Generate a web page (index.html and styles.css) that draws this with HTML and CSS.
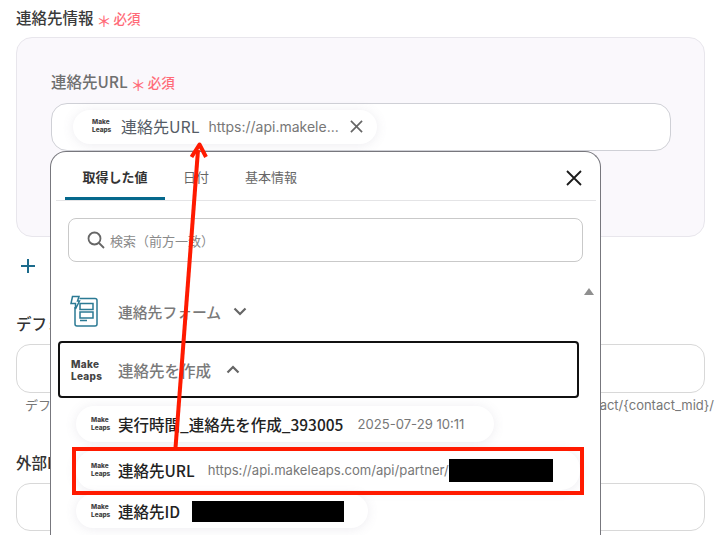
FILE: index.html
```html
<!DOCTYPE html>
<html lang="ja">
<head>
<meta charset="utf-8">
<title>連絡先情報</title>
<link rel="stylesheet" href="styles.css">
</head>
<body>
<main class="page">
  <div class="label section-label">連絡先情報<span class="req"><span class="star">＊</span>必須</span></div>
  <section class="card">
    <div class="label field-label">連絡先URL<span class="req"><span class="star">＊</span>必須</span></div>
    <div class="input">
      <div class="chip chip-main">
        <span class="logo logo-s"><span>Make</span><span>Leaps</span></span>
        <span class="chip-name">連絡先URL</span>
        <span class="chip-value">https://api.makele...</span>
        <svg class="chip-x" viewBox="0 0 14 14"><path d="M1 1 13 13M13 1 1 13"/></svg>
      </div>
    </div>
  </section>
  <svg class="plus" viewBox="0 0 16 16"><path d="M8 1V15M1 8H15"/></svg>
  <div class="label default-label">デフォルト値</div>
  <div class="blank-input"></div>
  <div class="hint"><span>デフォルト値</span><span>act/{contact_mid}/</span></div>
  <div class="label external-label">外部ID</div>
  <div class="blank-input blank-last"></div>
</main>

<div class="popup">
  <div class="tabs">
    <div class="tab tab-active">取得した値</div>
    <div class="tab tab-date">日付</div>
    <div class="tab tab-basic">基本情報</div>
    <svg class="close" viewBox="0 0 16 16"><path d="M1 1 15 15M15 1 1 15"/></svg>
  </div>
  <div class="search">
    <svg class="search-icon" viewBox="0 0 18 18"><circle cx="7.500" cy="7.500" r="6"/><path d="M12 12 17 17"/></svg>
    <span>検索（前方一致）</span>
  </div>
  <div class="scroll-up"></div>
  <div class="group group-form">
    <svg class="form-icon" viewBox="0 0 28 32"><path d="M9.500 3.500H25a2 2 0 0 1 2 2V29a2 2 0 0 1-2 2H7a2 2 0 0 1-2-2V12"/><path d="M2.500 1.500H9L7.500 6H9.500L5.500 14V8.500H1Z"/><path d="M10 8.500H23V14.500H10ZM10 17H23V23H10ZM10 25.500H17"/></svg>
    <span class="group-name">連絡先フォーム</span>
    <svg class="chev" viewBox="0 0 14 9"><path d="M1.500 1.500 7 7 12.500 1.500"/></svg>
  </div>
  <div class="group group-make">
    <span class="logo logo-l"><span>Make</span><span>Leaps</span></span>
    <span class="group-name">連絡先を作成</span>
    <svg class="chev" viewBox="0 0 14 9"><path d="M1.500 7.500 7 2 12.500 7.500"/></svg>
  </div>
  <div class="rows">
    <div class="chip row row-time">
      <span class="logo logo-s"><span>Make</span><span>Leaps</span></span>
      <span class="row-name">実行時間_連絡先を作成_393005</span>
      <span class="row-value">2025-07-29 10:11</span>
    </div>
    <div class="chip row row-url">
      <span class="logo logo-s"><span>Make</span><span>Leaps</span></span>
      <span class="row-name">連絡先URL</span>
      <span class="row-value">https://api.makeleaps.com/api/partner/</span>
      <span class="mask mask-url"></span>
    </div>
    <div class="chip row row-id">
      <span class="logo logo-s"><span>Make</span><span>Leaps</span></span>
      <span class="row-name">連絡先ID</span>
      <span class="mask mask-id"></span>
    </div>
  </div>
</div>

<div class="red-box"></div>
<svg class="arrow" viewBox="0 0 728 535"><path d="M175.500 448 198 150"/><path d="M191.500 157 199.500 144.500 206 157"/></svg>
</body>
</html>
```
FILE: styles.css
```css
* { box-sizing: border-box; }
html, body { margin: 0; height: 535px; overflow: hidden; }
body {
  position: relative;
  width: 728px;
  background: #fff;
  font-family: "Noto Sans CJK JP", "Noto Sans", sans-serif;
  color: #333;
}
.page { padding: 6px 23px 0 16px; height: 535px; overflow: hidden; }
.label { font-size: 15.500px; line-height: 22px; height: 22px; font-weight: 500; white-space: nowrap; }
.section-label { color: #3a3a3a; }
.req { color: #ff6b78; font-size: 13.500px; font-weight: 500; }
.star { font-size: 15px; display: inline-block; line-height: 10px; vertical-align: -3px; margin: 0 2px 0 3px; }
.card {
  margin-top: 9px;
  height: 200px;
  padding: 32px 34px 0;
  background: #faf8fc;
  border: 1px solid #e8e6ec;
  border-radius: 16px;
}
.field-label { color: #6f6f6f; }
.input {
  margin-top: 11px;
  width: 620px;
  height: 48px;
  padding: 6px 0 0 21px;
  background: #fff;
  border: 1px solid #cfd0d6;
  border-radius: 16px;
}
.chip {
  display: flex;
  align-items: center;
  background: #fff;
  border-radius: 19px;
  box-shadow: 0 1px 12px rgba(110, 95, 135, .12);
}
.chip-main { width: 304px; height: 34px; padding: 0 0 2px 19px; }
.logo {
  display: block;
  flex: none;
  font-family: "Inter", "Liberation Sans", sans-serif;
  font-weight: 800;
  color: #444;
}
.logo span { display: block; }
.logo-s { font-size: 6.500px; line-height: 8px; width: 29px; }
.logo-l { font-size: 10px; line-height: 12px; width: 47px; letter-spacing: .3px; }
.chip-name { font-size: 16px; color: #555c66; white-space: nowrap; }
.chip-value { font-size: 14px; color: #777; margin-left: 9px; font-family: "Inter", "Liberation Sans", sans-serif; white-space: nowrap; }
.chip-x { width: 13px; height: 13px; margin-left: 11px; flex: none; }
.chip-x path { stroke: #666; stroke-width: 1.800; fill: none; }
.plus { display: block; width: 16px; height: 16px; margin: 21px 0 0 4px; }
.plus path { stroke: #1c6b8c; stroke-width: 2; fill: none; }
.default-label { margin-top: 38px; }
.external-label { margin-top: 38px; }
.blank-input {
  margin-top: 10px;
  height: 49px;
  border: 1px solid #d8d8d8;
  border-radius: 14px;
  background: #fff;
}
.blank-last { height: 48px; }
.hint {
  display: flex;
  justify-content: space-between;
  margin: 4px -9px 0 9px;
  font-size: 13px;
  line-height: 16px;
  color: #777;
  font-family: "Inter", "Noto Sans CJK JP", sans-serif;
}

.popup {
  position: absolute;
  left: 50px;
  top: 151px;
  width: 551px;
  height: 384px;
  overflow: hidden;
  background: #fff;
  border: 1px solid #77777d;
  border-bottom: 0;
  border-radius: 16px 16px 0 0;
}
.tabs {
  position: relative;
  height: 49px;
  margin: 0 4px 0 5px;
  border-bottom: 1px solid #e4e4e6;
  font-size: 13px;
  line-height: 50px;
  color: #666;
}
.tab { position: absolute; top: 0; height: 48px; }
.tab-active { left: 9px; width: 100px; text-align: center; color: #333; font-weight: 700; border-bottom: 3px solid #05688c; border-radius: 4px 4px 0 0; }
.tab-date { left: 127px; }
.tab-basic { left: 189px; }
.close { position: absolute; right: 14px; top: 18px; width: 16px; height: 16px; }
.close path { stroke: #1b1b1b; stroke-width: 1.800; fill: none; }
.search {
  display: flex;
  align-items: center;
  gap: 5px;
  margin: 17px 0 0 17px;
  width: 515px;
  height: 44px;
  padding-left: 18px;
  border: 1px solid #c9c9c9;
  border-radius: 8px;
  font-size: 13px;
  color: #8a8a8a;
}
.search-icon { width: 18px; height: 18px; flex: none; }
.search-icon circle, .search-icon path { stroke: #666; stroke-width: 1.800; fill: none; }
.scroll-up {
  position: absolute;
  left: 533px;
  top: 136px;
  width: 0;
  height: 0;
  border: 5px solid transparent;
  border-top: 0;
  border-bottom: 7px solid #8f8f8f;
}
.group { display: flex; align-items: center; font-size: 15.500px; font-weight: 500; color: #7a7a7a; }
.group-form { height: 50px; margin: 24px 0 0 19px; font-size: 14.800px; }
.form-icon { width: 28px; height: 32px; margin-right: 20px; flex: none; }
.form-icon path { stroke: #2b7a94; stroke-width: 1.500; fill: none; }
.group-make {
  width: 521px;
  height: 57px;
  margin: 5px 0 0 7px;
  padding-left: 11px;
  border: 2px solid #111;
  border-radius: 4px;
}
.chev { width: 14px; height: 9px; margin-left: 15px; flex: none; }
.group-form .chev { margin-left: 12px; }
.chev path { stroke: #666; stroke-width: 2.200; fill: none; }
.rows { margin: 8px 0 0 25px; display: flex; flex-direction: column; }
.row { padding-left: 15px; }
.row-time { width: 418px; height: 36px; }
.row-url { width: 504px; height: 40px; margin-top: 8px; }
.row-id { width: 292px; height: 34px; margin-top: 4px; }
.row .logo-s { width: 27px; }
.row-name { font-size: 15.500px; color: #222; font-weight: 500; white-space: nowrap; }
.row-value { font-size: 13.100px; color: #777; margin-left: 14px; white-space: nowrap; font-family: "Inter", "Liberation Sans", sans-serif; }
.row-url .row-value { margin-left: 13px; }
.mask { background: #000; flex: none; display: block; }
.mask-url { width: 104px; height: 23px; }
.mask-id { width: 152px; height: 21px; margin-left: 12px; }

.red-box {
  position: absolute;
  left: 72px;
  top: 447px;
  width: 512px;
  height: 48px;
  border: 4px solid #ff1a00;
}
.arrow {
  position: absolute;
  left: 0;
  top: 0;
  width: 728px;
  height: 535px;
  pointer-events: none;
}
.arrow path { stroke: #ff1a00; stroke-width: 4; fill: none; stroke-linejoin: round; }
```
